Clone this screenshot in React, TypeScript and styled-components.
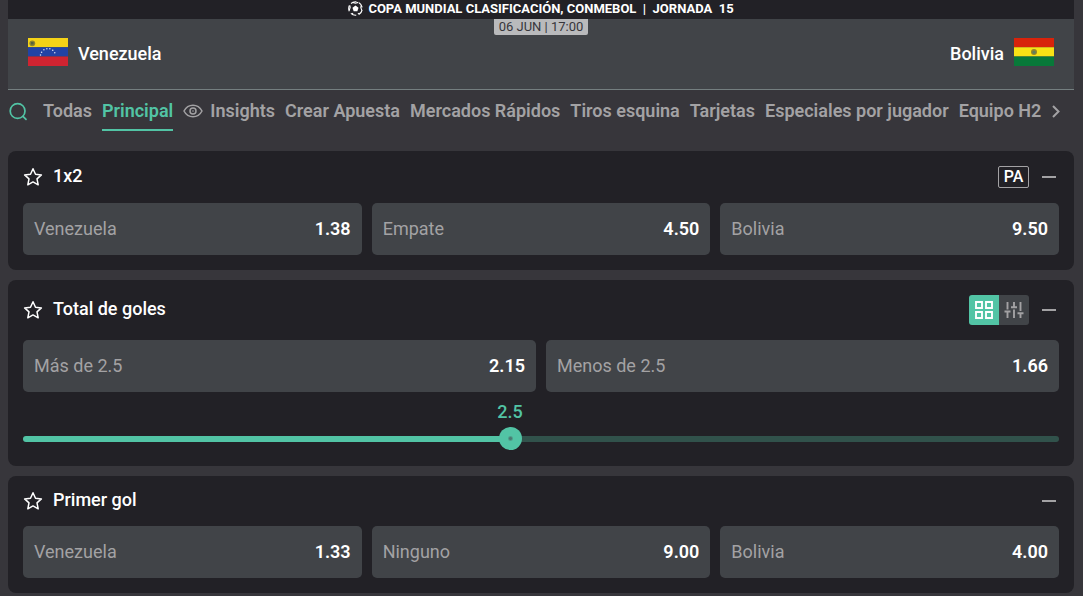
import React, { useState } from 'react';
import styled, { createGlobalStyle } from 'styled-components';

const GlobalStyle = createGlobalStyle`
  * { box-sizing: border-box; }
  body {
    margin: 0;
    background: #37363b;
    color: #fff;
    font-family: Roboto, "Liberation Sans", sans-serif;
    font-size: 18px;
    line-height: 24px;
  }
  button {
    margin: 0;
    padding: 0;
    border: 0;
    background: none;
    color: inherit;
    font: inherit;
    cursor: pointer;
  }
  svg { display: block; flex: none; }
`;

const Page = styled.main`
  padding: 0 9px 3px 8px;
`;

const Competition = styled.div`
  display: flex;
  justify-content: center;
  align-items: center;
  gap: 5px;
  height: 19px;
  padding-bottom: 2px;
  background: #222126;
  font-size: 13px;
  line-height: 16px;
  font-weight: 700;
  white-space: pre;
`;

const Scoreboard = styled.header`
  display: grid;
  grid-template-columns: 1fr auto 1fr;
  height: 71px;
  padding: 0 20px;
  background: #414448;
  border-bottom: 1px solid #747f80;
`;

const Team = styled.div<{ $away?: boolean }>`
  display: flex;
  flex-direction: ${(p) => (p.$away ? 'row-reverse' : 'row')};
  align-items: center;
  gap: 10px;
  font-weight: 500;
`;

const Flag = styled.svg`
  width: 40px;
  height: 28px;
  margin-bottom: 4px;
`;

const Kickoff = styled.time`
  align-self: start;
  height: 16px;
  padding: 0 5px;
  border-radius: 0 0 2px 2px;
  background: #b9babc;
  color: #37363b;
  font-size: 13px;
  line-height: 16px;
`;

const Tabs = styled.nav`
  display: flex;
  align-items: center;
  gap: 10px;
  height: 61px;
  padding-bottom: 19px;
  color: #a3a2a4;
  font-weight: 600;
  white-space: nowrap;
  overflow: hidden;
`;

const Tab = styled.button<{ $active?: boolean }>`
  display: flex;
  align-items: center;
  gap: 7px;
  height: 40px;
  flex: none;
  border-top: 2px solid transparent;
  border-bottom: 2px solid ${(p) => (p.$active ? '#52c4a5' : 'transparent')};
  color: ${(p) => (p.$active ? '#52c4a5' : 'inherit')};
`;

const IconButton = styled.button`
  display: grid;
  place-items: center;
  flex: none;
  color: #a3a2a4;
`;

const SearchButton = styled(IconButton)`
  margin-right: 5px;
  color: #52c4a5;
`;

const Markets = styled.div`
  display: grid;
  gap: 10px;
`;

const Market = styled.section`
  padding: 0 15px 15px;
  border-radius: 8px;
  background: #222126;
`;

const MarketHeader = styled.div<{ $height: number }>`
  display: flex;
  align-items: center;
  gap: 10px;
  height: ${(p) => p.$height}px;
`;

const Title = styled.h2`
  flex: 1;
  margin: 0;
  padding-bottom: 2px;
  font-size: 18px;
  line-height: 24px;
  font-weight: 500;
`;

const StarButton = styled(IconButton)`
  color: #fff;
`;

const CollapseButton = styled(IconButton)`
  width: 20px;
  height: 20px;
`;

const EarlyPayout = styled.button`
  width: 31px;
  height: 22px;
  border: 1px solid #a3a2a4;
  border-radius: 2px;
  font-size: 16px;
  line-height: 18px;
  font-weight: 500;
`;

const ViewSwitch = styled.div`
  display: flex;
  border-radius: 3px;
  overflow: hidden;
`;

const ViewButton = styled(IconButton)<{ $active?: boolean }>`
  width: 30px;
  height: 30px;
  background: ${(p) => (p.$active ? '#52c4a5' : '#414448')};
  color: ${(p) => (p.$active ? '#fff' : '#a3a2a4')};
`;

const Outcomes = styled.div`
  display: grid;
  grid-auto-flow: column;
  grid-auto-columns: 1fr;
  gap: 10px;
`;

const Outcome = styled.button`
  display: flex;
  justify-content: space-between;
  align-items: center;
  height: 52px;
  padding: 0 11px;
  border-radius: 5px;
  background: #414448;
`;

const OutcomeName = styled.span`
  color: #a3a2a4;
`;

const Odds = styled.span`
  font-weight: 600;
`;

const LineSelector = styled.div`
  padding-top: 8px;
`;

const LineValue = styled.label`
  display: block;
  width: 94%;
  text-align: center;
  color: #52c4a5;
  font-weight: 500;
`;

const LineSlider = styled.input<{ $percent: number }>`
  appearance: none;
  display: block;
  width: 100%;
  height: 24px;
  margin: 3px 0 0;
  background: none;

  &::-webkit-slider-runnable-track {
    height: 6px;
    border-radius: 3px;
    background: linear-gradient(to right, #52c4a5 ${(p) => p.$percent}%, #31524b ${(p) => p.$percent}%);
  }
  &::-webkit-slider-thumb {
    appearance: none;
    width: 23px;
    height: 23px;
    margin-top: -9px;
    border-radius: 50%;
    background: radial-gradient(circle, #4b7a72 1px, #52c4a5 3px);
  }
`;

const BallIcon = () => (
  <svg width="15" height="15" viewBox="0 0 16 16" fill="none" stroke="#fff">
    <circle cx="8" cy="8" r="7.2" strokeWidth="1.3" strokeDasharray="6.2 2.85" strokeDashoffset="-1.4" />
    <path d="M8 4.800l3.200 2.300-1.200 3.800H6L4.800 7.100z" fill="#fff" stroke="none" />
    <path d="M5 1.500L8 2.400l3-.9M1.400 9.800l.9-2.800-.4-2.400M14.600 9.800l-.9-2.800.4-2.400M4.200 14l1.200-.9M11.800 14l-1.200-.9" strokeWidth="1.200" />
  </svg>
);

const SearchIcon = () => (
  <svg width="20" height="20" viewBox="0 0 20 20" fill="none" stroke="currentColor" strokeWidth="1.700" strokeLinecap="round">
    <circle cx="9.600" cy="10" r="7.400" />
    <path d="M15 15.400l3 3" />
  </svg>
);

const EyeIcon = () => (
  <svg width="20" height="20" viewBox="0 0 20 20" fill="none" stroke="currentColor" strokeWidth="1.500">
    <path d="M1 10c2-3.800 5.200-5.800 9-5.800s7 2 9 5.800c-2 3.800-5.200 5.800-9 5.800S3 13.800 1 10z" />
    <circle cx="10" cy="10" r="3" />
    <circle cx="10" cy="10" r=".8" fill="currentColor" stroke="none" />
  </svg>
);

const ChevronIcon = () => (
  <svg width="10" height="14" viewBox="0 0 10 14" fill="none" stroke="currentColor" strokeWidth="2">
    <path d="M2 2l5.500 5.500L2 13" />
  </svg>
);

const StarIcon = () => (
  <svg width="20" height="20" viewBox="0 0 20 20" fill="none" stroke="currentColor" strokeWidth="1.500" strokeLinejoin="round">
    <path d="M10 1.800l2.500 5.400 5.900.7-4.400 4 1.200 5.900L10 14.900l-5.200 2.900L6 11.900l-4.400-4 5.900-.7z" />
  </svg>
);

const MinusIcon = () => (
  <svg width="14" height="2" viewBox="0 0 14 2">
    <path d="M0 1h14" stroke="currentColor" strokeWidth="2" />
  </svg>
);

const GridIcon = () => (
  <svg width="18" height="18" viewBox="0 0 18 18" fill="none" stroke="currentColor" strokeWidth="1.900">
    <path d="M1 1h6v6H1zM11 1h6v6h-6zM1 11h6v6H1zM11 11h6v6h-6z" />
  </svg>
);

const SlidersIcon = () => (
  <svg width="20" height="20" viewBox="0 0 20 20" fill="none" stroke="currentColor" strokeWidth="1.900">
    <path d="M3.500 2v7.500M.5 11.500h6M3.500 11.500V18M10 2v5M7 7.200h6M10 9.500V18M16.500 2v9M13.500 13.300h6M16.500 13.300V18" />
  </svg>
);

const VenezuelaFlag = () => (
  <Flag viewBox="0 0 40 28" role="img" aria-label="Bandera de Venezuela">
    <path fill="#f4d317" d="M0 0h40v9.300H0z" />
    <path fill="#2143a5" d="M0 9.300h40v9.200H0z" />
    <path fill="#cf2431" d="M0 18.500h40V28H0z" />
    <circle cx="4.300" cy="5.300" r="2.900" fill="#8a8430" />
    <path d="M3 4h2.600v2.500H3z" fill="#55623c" />
    <path d="M12.500 17a7.600 7.600 0 0 1 15 0" fill="none" stroke="#dfe5f5" strokeWidth="1.500" strokeLinecap="round" strokeDasharray="0 3.100" />
  </Flag>
);

const BoliviaFlag = () => (
  <Flag viewBox="0 0 40 28" role="img" aria-label="Bandera de Bolivia">
    <path fill="#d8230b" d="M0 0h40v9.300H0z" />
    <path fill="#f9e215" d="M0 9.300h40v9.200H0z" />
    <path fill="#087939" d="M0 18.500h40V28H0z" />
    <circle cx="20" cy="14" r="3" fill="#938529" />
    <circle cx="20" cy="14.300" r="1.500" fill="#5b7e65" />
  </Flag>
);

const tabs = [
  'Todas', 'Principal', 'Insights', 'Crear Apuesta', 'Mercados Rápidos',
  'Tiros esquina', 'Tarjetas', 'Especiales por jugador', 'Equipo H2',
];

type MarketCardProps = {
  title: string;
  headerHeight: number;
  outcomes: [string, string][];
  controls?: React.ReactNode;
  children?: React.ReactNode;
};

const MarketCard = ({ title, headerHeight, outcomes, controls, children }: MarketCardProps) => (
  <Market>
    <MarketHeader $height={headerHeight}>
      <StarButton aria-label={`Marcar ${title} como favorito`}><StarIcon /></StarButton>
      <Title>{title}</Title>
      {controls}
      <CollapseButton aria-label={`Contraer ${title}`}><MinusIcon /></CollapseButton>
    </MarketHeader>
    <Outcomes>
      {outcomes.map(([name, odds]) => (
        <Outcome key={name}>
          <OutcomeName>{name}</OutcomeName>
          <Odds>{odds}</Odds>
        </Outcome>
      ))}
    </Outcomes>
    {children}
  </Market>
);

export default function App() {
  const [active, setActive] = useState('Principal');
  const [line, setLine] = useState(47);

  return (
    <>
      <GlobalStyle />
      <Page>
        <Competition>
          <BallIcon />
          <span>COPA MUNDIAL CLASIFICACIÓN, CONMEBOL  |  JORNADA  15</span>
        </Competition>
        <Scoreboard>
          <Team><VenezuelaFlag />Venezuela</Team>
          <Kickoff>06 JUN | 17:00</Kickoff>
          <Team $away><BoliviaFlag />Bolivia</Team>
        </Scoreboard>
        <Tabs aria-label="Mercados">
          <SearchButton aria-label="Buscar"><SearchIcon /></SearchButton>
          {tabs.map((tab) => (
            <Tab key={tab} $active={tab === active} onClick={() => setActive(tab)}>
              {tab === 'Insights' && <EyeIcon />}
              {tab}
            </Tab>
          ))}
          <IconButton aria-label="Ver más mercados"><ChevronIcon /></IconButton>
        </Tabs>
        <Markets>
          <MarketCard
            title="1x2"
            headerHeight={52}
            outcomes={[['Venezuela', '1.38'], ['Empate', '4.50'], ['Bolivia', '9.50']]}
            controls={<EarlyPayout>PA</EarlyPayout>}
          />
          <MarketCard
            title="Total de goles"
            headerHeight={60}
            outcomes={[['Más de 2.5', '2.15'], ['Menos de 2.5', '1.66']]}
            controls={
              <ViewSwitch>
                <ViewButton $active aria-label="Vista de cuadrícula"><GridIcon /></ViewButton>
                <ViewButton aria-label="Vista de ajustes"><SlidersIcon /></ViewButton>
              </ViewSwitch>
            }
          >
            <LineSelector>
              <LineValue htmlFor="goal-line">2.5</LineValue>
              <LineSlider
                id="goal-line"
                type="range"
                min={0}
                max={100}
                value={line}
                $percent={line}
                onChange={(e) => setLine(Number(e.target.value))}
              />
            </LineSelector>
          </MarketCard>
          <MarketCard
            title="Primer gol"
            headerHeight={50}
            outcomes={[['Venezuela', '1.33'], ['Ninguno', '9.00'], ['Bolivia', '4.00']]}
          />
        </Markets>
      </Page>
    </>
  );
}
